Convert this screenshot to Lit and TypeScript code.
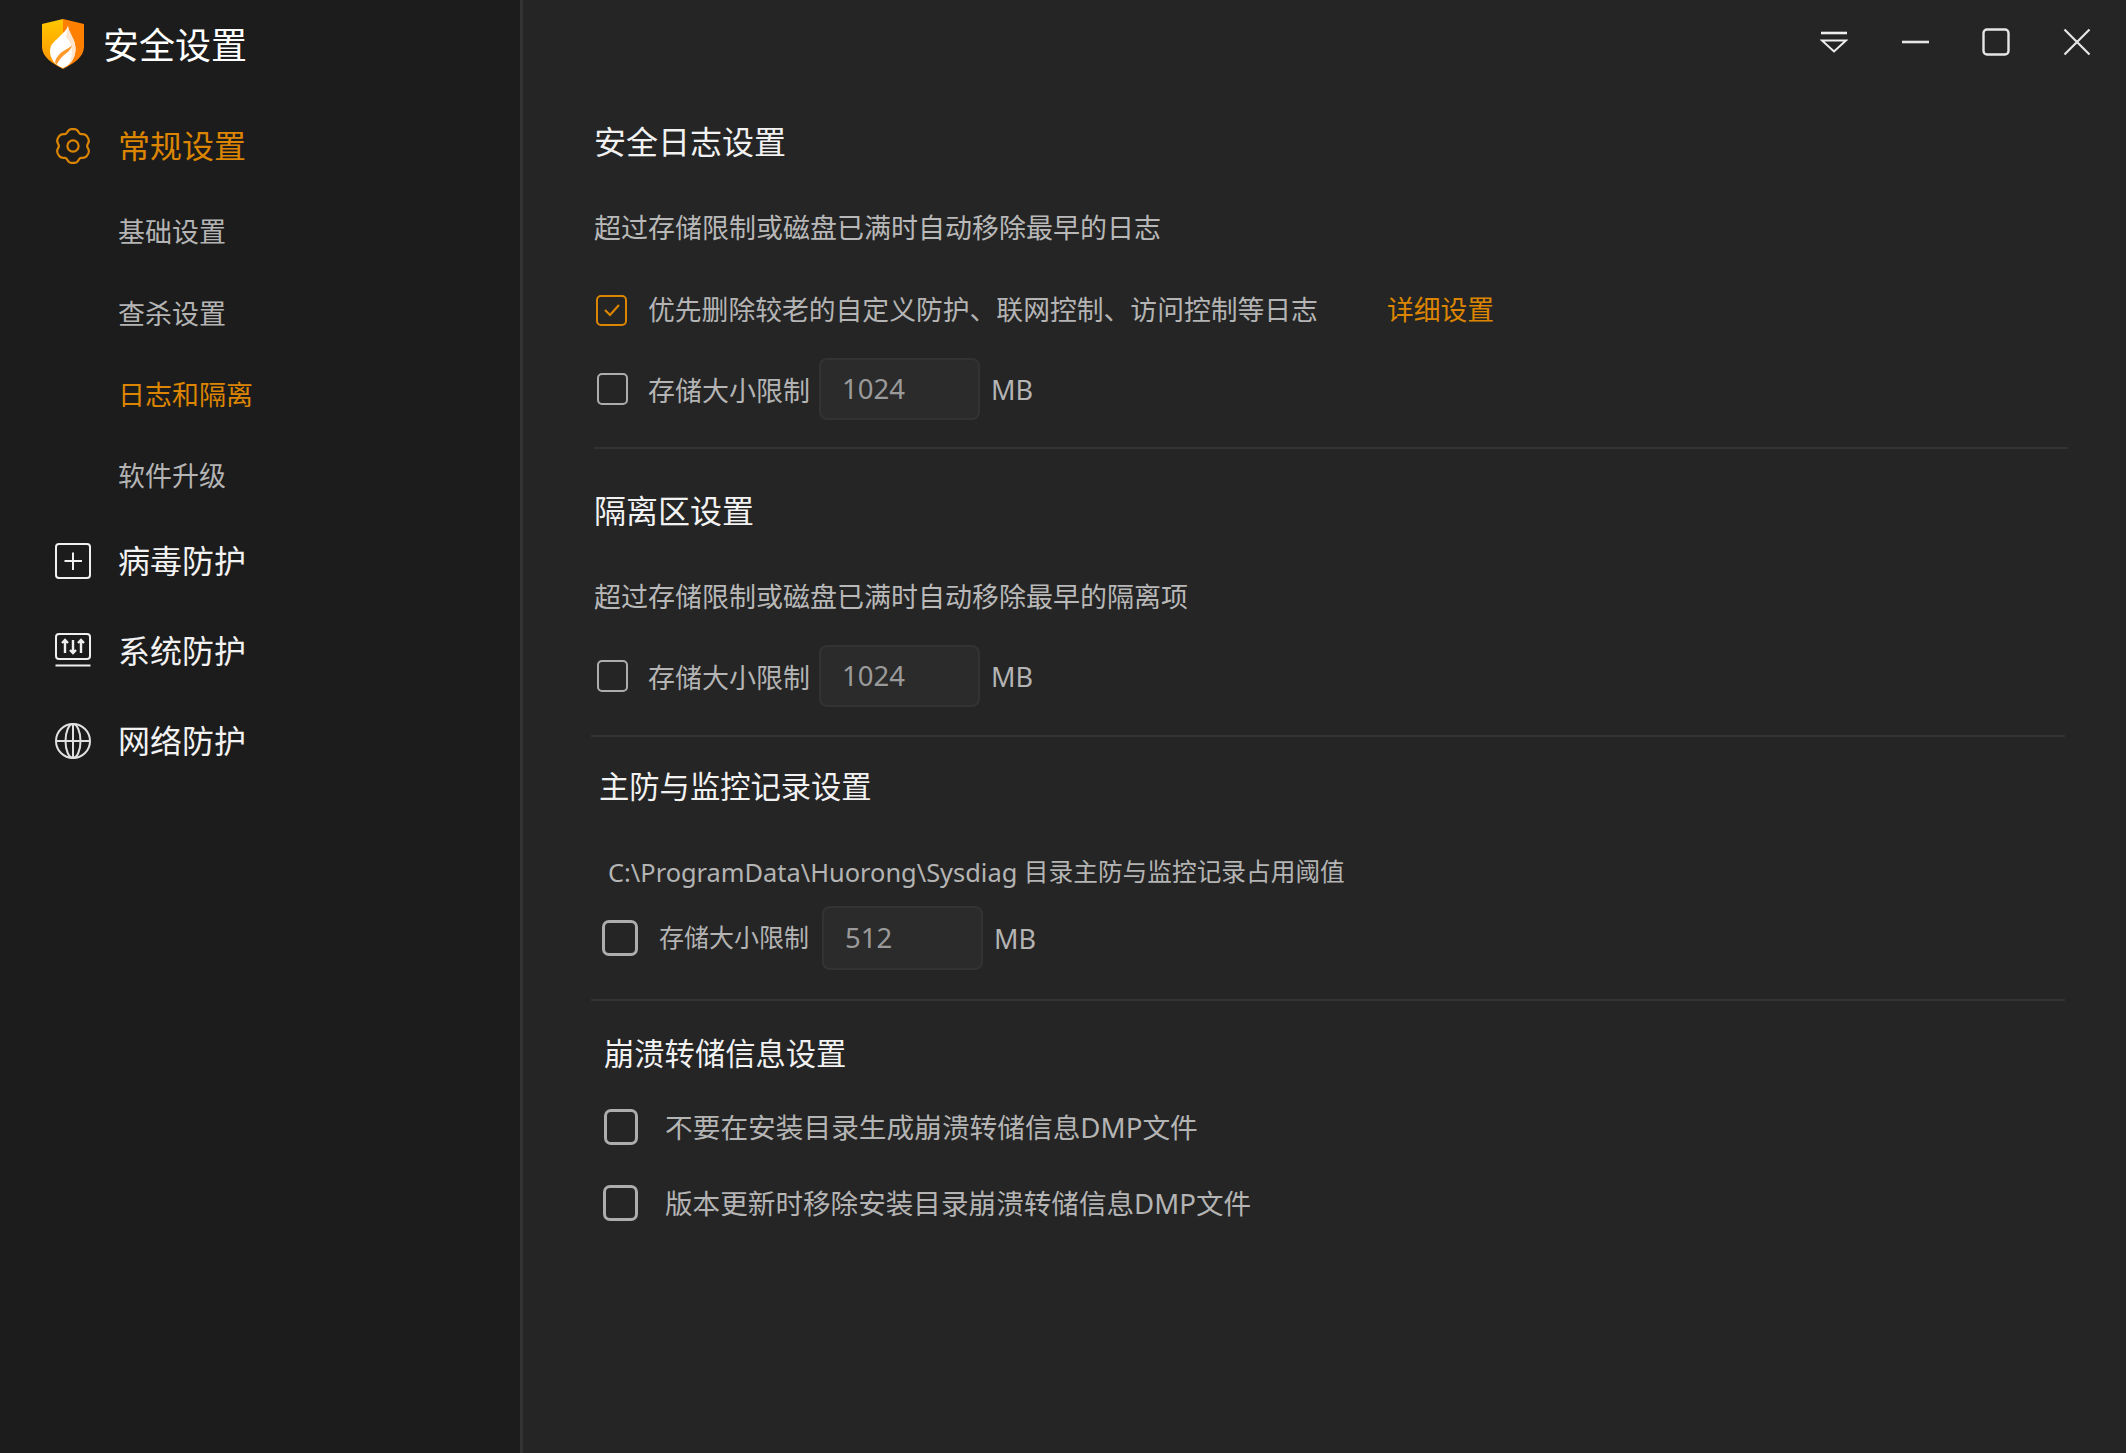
import { LitElement, html, css, svg } from "lit";
import { customElement } from "lit/decorators.js";

const gearPath = (() => {
  let d = "";
  for (let i = 0; i <= 180; i++) {
    const t = (i / 180) * Math.PI * 2;
    const r = 15.9 + 1.4 * Math.cos(6 * t) - 0.35 * Math.cos(12 * t);
    d += `${i ? "L" : "M"}${(18 + r * Math.sin(t)).toFixed(2)} ${(18 - r * Math.cos(t)).toFixed(2)}`;
  }
  return d + "Z";
})();

const icons = {
  logo: svg`<svg class="logo" width="42" height="50" viewBox="0 0 42 50">
    <defs><linearGradient id="lg" x1="0" y1="0" x2="0" y2="1"><stop offset="0" stop-color="#ffc800"/><stop offset="1" stop-color="#ff8f00"/></linearGradient></defs>
    <path d="M21 0 L0 5 V28 C0 38 11 45 21 50 Z" fill="url(#lg)"/>
    <path d="M21 0 L42 5 V28 C42 38 31 45 21 50 Z" fill="#ff8000"/>
    <path d="M26 7 C27 15 34 20 33.500 31 C33 41 27 47 21 49 C13 46 8 40 8 32 C8 24 14 22 18 17 C21 14 24 12 26 7 Z" fill="#fff"/>
    <path d="M26 7 C27 15 34 20 33.500 31 C33 38 30 43 26 46 C31 38 32 26 24 18 Z" fill="#fde6d0"/>
    <path d="M30 26 C29 32 24 34 20 38 C17 41 15 44 15 46 L13 43 C14 38 19 33 23 31 C26 29 29 28 30 26 Z" fill="#ff9a2a"/>
  </svg>`,
  gear: svg`<svg width="36" height="36" viewBox="0 0 36 36" fill="none" stroke="#dc8500" stroke-width="2.2"><path d="${gearPath}"/><circle cx="18" cy="18" r="5.6"/></svg>`,
  plus: svg`<svg width="36" height="36" viewBox="0 0 36 36" fill="none" stroke="#f0f0f0" stroke-width="2"><rect x="1" y="1" width="34" height="34" rx="3"/><path d="M18 9.5V27M9.500 18H27"/></svg>`,
  sys: svg`<svg width="36" height="36" viewBox="0 0 36 36" fill="none" stroke="#f0f0f0" stroke-width="2"><rect x="1" y="1" width="34" height="25" rx="3"/><path d="M0.5 32.500H35.5"/><path stroke-width="2.400" d="M10 20V7M7 10 10 7l3 3M18 7v13M15 17 18 20l3-3M26 20V7M23 10 26 7l3 3"/></svg>`,
  globe: svg`<svg width="36" height="36" viewBox="0 0 36 36" fill="none" stroke="#e0e0e0" stroke-width="2"><circle cx="18" cy="18" r="17"/><ellipse cx="18" cy="18" rx="7.5" ry="17"/><path d="M1 18H35"/><path d="M18 1V35"/></svg>`,
  filter: svg`<svg width="28" height="22" viewBox="0 0 28 22" fill="none" stroke="#eee" stroke-width="2"><path d="M1 2H27" stroke-width="2.6"/><path d="M2 9.5H26L14 20.5Z"/></svg>`,
  min: svg`<svg width="28" height="28" viewBox="0 0 28 28" fill="none" stroke="#e6e6e6" stroke-width="2.6"><path d="M1 14H28"/></svg>`,
  max: svg`<svg width="28" height="28" viewBox="0 0 28 28" fill="none" stroke="#e6e6e6" stroke-width="2.4"><rect x="1.5" y="1.5" width="25" height="25" rx="3.5"/></svg>`,
  close: svg`<svg width="28" height="28" viewBox="0 0 28 28" fill="none" stroke="#e6e6e6" stroke-width="2.2"><path d="M1.5 1.5 26.5 26.5M26.5 1.5 1.5 26.5"/></svg>`,
};

@customElement("app-root")
export class AppRoot extends LitElement {
  static styles = css`
    :host {
      display: flex;
      width: 2126px;
      height: 1453px;
      overflow: hidden;
      font-family: "Noto Sans", "Noto Sans CJK SC", sans-serif;
      font-weight: 400;
      background: #252525;
    }
    svg { display: block; flex: none; }
    .side {
      width: 520px;
      flex: none;
      background: #1c1c1c;
      border-right: 3px solid #333;
      display: flex;
      flex-direction: column;
    }
    .brand {
      display: flex;
      align-items: center;
      gap: 19px;
      height: 50px;
      margin: 19px 0 0 42px;
      color: #fff;
      font-size: 36px;
      line-height: 50px;
    }
    .brand span { padding-top: 4px; }
    .nav { display: flex; align-items: center; gap: 27px; padding-left: 55px; height: 40px; font-size: 32px; line-height: 40px; color: #f2f2f2; }
    .nav.on { color: #dc8500; margin-top: 57px; }
    .nav.g { margin-top: 50px; }
    .nav.first { margin-top: 45px; }
    .sub { padding-left: 118px; height: 40px; margin-top: 41px; font-size: 27px; line-height: 40px; color: #b4b4b4; }
    .sub.first { margin-top: 46px; }
    .sub.nudge { margin-top: 42px; }
    .sub.on { color: #dc8500; }
    .main { flex: 1; min-width: 0; display: flex; flex-direction: column; position: relative; }
    .bar { display: flex; justify-content: flex-end; align-items: center; gap: 53px; height: 28px; margin-top: 28px; padding-right: 35px; }
    .title { height: 44px; font-size: 32px; line-height: 44px; color: #f2f2f2; }
    .title.small { font-size: 30.3px; }
    .desc { height: 40px; font-size: 27px; line-height: 40px; color: #b8b8b8; margin-top: 44px; white-space: nowrap; }
    .row { display: flex; align-items: center; font-size: 27px; color: #b4b4b4; white-space: nowrap; }
    .h40 { height: 40px; line-height: 40px; }
    .ind { margin-left: 3px; }
    .ind2 { margin-left: 2px; }
    .box { flex: none; box-sizing: border-box; width: 31px; height: 32px; border: 2.5px solid #adadad; border-radius: 5px; display: flex; align-items: center; justify-content: center; }
    .box.on { border-color: #dc8500; height: 31px; margin-right: 21px; }
    .input { box-sizing: border-box; width: 161px; height: 62px; margin: 0 11px 0 9px; padding-left: 21px; background: #2b2b2b; border: 2px solid #333; border-radius: 8px; font-size: 27.5px; line-height: 58px; color: #9a9a9a; }
    .dense { font-size: 26.8px; }
    .link { color: #dc8500; margin-left: 69px; }
    .rule { height: 2px; background: #323232; }
    .s1 { margin: 64px 58px 0 71px; }
    .s2 { margin: 0 58px 0 71px; }
    .s3 { margin: 0 61px 0 68px; }
    .s4 { margin: 0 61px 0 68px; }
    .gap20 { margin-right: 20px; }
    .mt42 { margin-top: 42px; }
    .mt28 { margin-top: 28px; }
    .mt27 { margin-top: 27px; }
    .mt40 { margin-top: 40px; }
    .t3 { margin-left: 8px; }
    .p3 { margin: 43px 0 0 17px; font-size: 24.7px; }
    .latin { font-size: 25.4px; }
    .r3 { margin: 14px 0 0 11px; height: 64px; }
    .r3 .box { width: 36px; height: 36px; border-width: 3px; border-radius: 7px; }
    .r3 .lbl { font-size: 25px; margin: -4px 0 0 21px; }
    .r3 .input { height: 64px; margin-left: 13px; line-height: 60px; }
    .r3rule { margin-top: 29px; }
    .t4 { margin: 31px 0 0 13px; }
    .r4 { margin: 31px 0 0 13px; font-size: 27.7px; }
    .r4 .box { width: 34px; height: 36px; border-width: 3px; border-radius: 7px; }
    .r4 .lbl { margin-left: 27px; }
    .r4b { margin: 36px 0 0 12px; font-size: 27.6px; }
    .r4b .box { width: 35px; height: 36px; border-width: 3px; border-radius: 7px; }
    .r4b .lbl { margin-left: 27px; }
  `;

  private limit(value: string) {
    return html`<div class="box gap20"></div><span>存储大小限制</span><div class="input">${value}</div><span>MB</span>`;
  }

  render() {
    return html`
      <aside class="side">
        <div class="brand">${icons.logo}<span>安全设置</span></div>
        <div class="nav on">${icons.gear}<span>常规设置</span></div>
        <div class="sub first">基础设置</div>
        <div class="sub nudge">查杀设置</div>
        <div class="sub on">日志和隔离</div>
        <div class="sub">软件升级</div>
        <div class="nav first">${icons.plus}<span>病毒防护</span></div>
        <div class="nav g">${icons.sys}<span>系统防护</span></div>
        <div class="nav g">${icons.globe}<span>网络防护</span></div>
      </aside>
      <main class="main">
        <div class="bar">${icons.filter}${icons.min}${icons.max}${icons.close}</div>
        <section class="s1">
          <div class="title">安全日志设置</div>
          <div class="desc">超过存储限制或磁盘已满时自动移除最早的日志</div>
          <div class="row h40 mt42 ind2 dense">
            <div class="box on"><svg width="18" height="14" viewBox="0 0 18 14" fill="none" stroke="#dc8500" stroke-width="2.2"><path d="M2 7l5 5 9-10"/></svg></div>
            <span>优先删除较老的自定义防护、联网控制、访问控制等日志</span>
            <span class="link">详细设置</span>
          </div>
          <div class="row mt28 ind">${this.limit("1024")}</div>
          <div class="rule mt27"></div>
        </section>
        <section class="s2">
          <div class="title mt40">隔离区设置</div>
          <div class="desc">超过存储限制或磁盘已满时自动移除最早的隔离项</div>
          <div class="row mt28 ind">${this.limit("1024")}</div>
        </section>
        <section class="s3">
          <div class="rule mt28"></div>
          <div class="title small mt28 t3">主防与监控记录设置</div>
          <div class="row h40 p3"><span class="latin">C:\\ProgramData\\Huorong\\Sysdiag&nbsp;</span>目录主防与监控记录占用阈值</div>
          <div class="row r3"><div class="box"></div><span class="lbl">存储大小限制</span><div class="input">512</div><span>MB</span></div>
          <div class="rule r3rule"></div>
        </section>
        <section class="s4">
          <div class="title small t4">崩溃转储信息设置</div>
          <div class="row h40 r4"><div class="box"></div><span class="lbl">不要在安装目录生成崩溃转储信息DMP文件</span></div>
          <div class="row h40 r4b"><div class="box"></div><span class="lbl">版本更新时移除安装目录崩溃转储信息DMP文件</span></div>
        </section>
      </main>
    `;
  }
}
